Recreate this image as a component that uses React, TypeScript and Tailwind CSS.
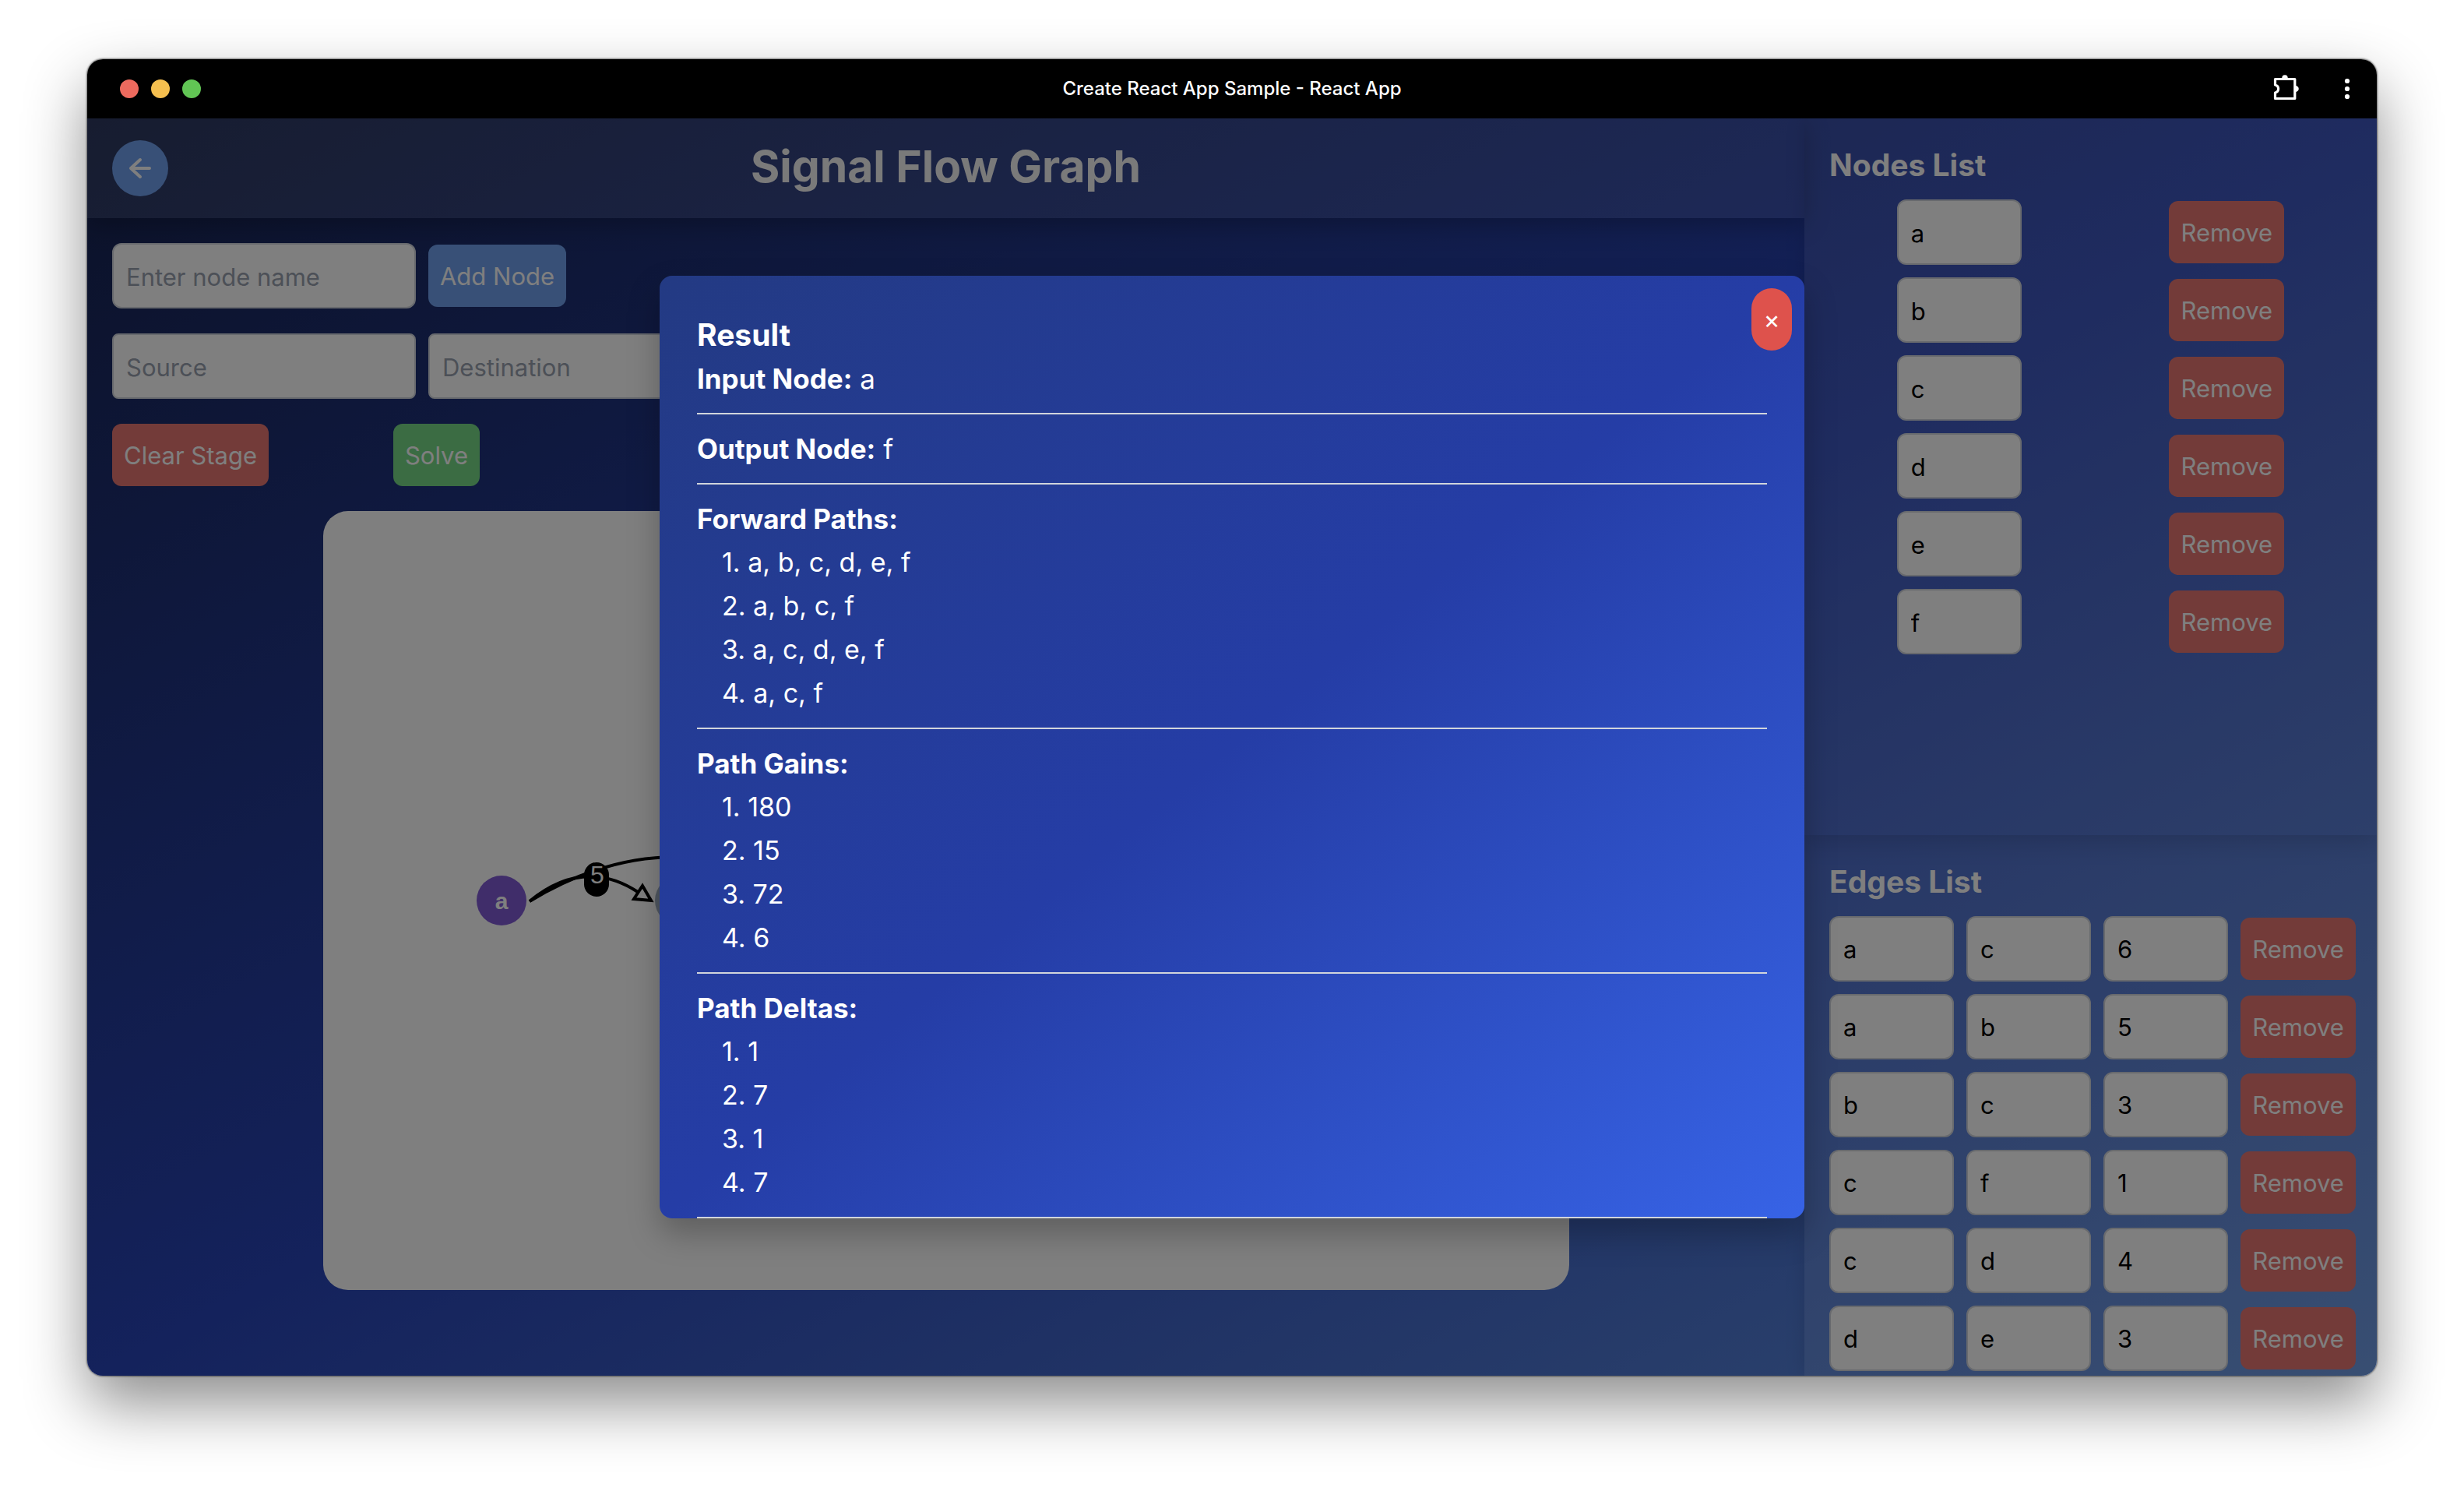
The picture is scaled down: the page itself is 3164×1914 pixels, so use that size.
import React from "react";

const forwardPaths = ["a, b, c, d, e, f", "a, b, c, f", "a, c, d, e, f", "a, c, f"];
const pathGains = ["180", "15", "72", "6"];
const pathDeltas = ["1", "7", "1", "7"];
const nodes = ["a", "b", "c", "d", "e", "f"];
const edges = [
  ["a", "c", "6"],
  ["a", "b", "5"],
  ["b", "c", "3"],
  ["c", "f", "1"],
  ["c", "d", "4"],
  ["d", "e", "3"],
];

const fieldClass =
  "h-[84px] border-2 border-gray-300 bg-white px-4 pt-0.5 text-[31px] text-black placeholder:text-gray-400";

function Field({ label, className }: { label: string; className: string }) {
  return <input aria-label={label} placeholder={label} className={`${fieldClass} w-[390px] ${className}`} />;
}

function SmallField({ label, value }: { label: string; value: string }) {
  return <input aria-label={label} defaultValue={value} className={`${fieldClass} w-40 rounded-xl`} />;
}

function Button({ children, className }: { children: string; className: string }) {
  return (
    <button type="button" className={`h-20 shrink-0 rounded-xl pt-0.5 text-[31px] text-white ${className}`}>
      {children}
    </button>
  );
}

function TitleBar() {
  return (
    <div className="grid h-[76px] shrink-0 grid-cols-[1fr_auto_1fr] items-center bg-black px-[34px] text-white">
      <div className="flex gap-4 pl-2">
        <span className="size-6 rounded-full bg-[#ed6a5e]" />
        <span className="size-6 rounded-full bg-[#f5bf4f]" />
        <span className="size-6 rounded-full bg-[#61c554]" />
      </div>
      <div className="text-center text-2xl font-medium">Create React App Sample - React App</div>
      <div className="flex items-center justify-end gap-14">
        <button type="button" aria-label="Extensions">
          <svg viewBox="0 0 36 36" className="size-9" fill="none" stroke="currentColor" strokeWidth="3.2" strokeLinejoin="round">
            <path d="M3.5 5.5 H28.8 V30.5 H3.5 V23 C9 21.5 9 14.5 3.5 13 Z" />
            <path d="M12.2 4.5 a3.8 4.3 0 0 1 7.6 0 Z M29.5 14 a4.3 4 0 0 1 0 8 Z" fill="currentColor" stroke="none" />
          </svg>
        </button>
        <button type="button" aria-label="Menu">
          <svg viewBox="0 0 8 28" className="h-7 w-2" fill="currentColor">
            <circle cx="4" cy="4" r="3.1" />
            <circle cx="4" cy="14" r="3.1" />
            <circle cx="4" cy="24" r="3.1" />
          </svg>
        </button>
      </div>
    </div>
  );
}

function Graph() {
  return (
    <svg viewBox="0 0 1600 1000" className="h-full w-full font-['Liberation_Sans',sans-serif]" fill="none">
      <path d="M265 501 Q453 387 641 501" stroke="black" strokeWidth="4" />
      <path d="M265 501 Q335 444 404 489" stroke="black" strokeWidth="4" />
      <path d="M410 481 L399 498 L421 500 Z" stroke="black" strokeWidth="4" fill="white" />
      <rect x="335" y="451" width="32" height="44" rx="16" fill="black" />
      <text x="352" y="478" textAnchor="middle" fill="white" fontSize="32">5</text>
      <circle cx="229" cy="500" r="32" fill="#805ad5" />
      <text x="229" y="511" textAnchor="middle" fill="white" fontSize="30" fontWeight="700">a</text>
      <circle cx="458" cy="500" r="32" fill="#a0aec0" />
      <text x="458" y="511" textAnchor="middle" fill="white" fontSize="30" fontWeight="700">b</text>
    </svg>
  );
}

function ResultList({ title, items }: { title: string; items: string[] }) {
  return (
    <section className="border-b-2 border-gray-300 py-4">
      <h3 className="font-bold">{title}</h3>
      <ol className="list-inside list-decimal pl-8 text-[34px] leading-[56px] marker:[font-variant-numeric:proportional-nums]">
        {items.map((item, i) => (
          <li key={i}>{item}</li>
        ))}
      </ol>
    </section>
  );
}

function ResultDialog() {
  return (
    <div
      role="dialog"
      aria-label="Result"
      className="relative h-3/4 w-1/2 overflow-hidden rounded-2xl bg-linear-to-br/srgb from-[#233a83] via-[#253da6] to-[#3763e6] px-12 pt-12 text-[35px] leading-[56px] text-white shadow-[0_20px_40px_rgba(0,0,0,0.25)]"
    >
      <button
        type="button"
        aria-label="Close"
        className="absolute top-4 right-4 h-20 w-[52px] rounded-full bg-[#de524c] pt-0.5 text-[32px]"
      >
        ×
      </button>
      <h2 className="text-[39px] font-bold">Result</h2>
      <p className="border-b-2 border-gray-300 pb-4">
        <strong className="font-bold">Input Node:</strong> a
      </p>
      <p className="border-b-2 border-gray-300 py-4">
        <strong className="font-bold">Output Node:</strong> f
      </p>
      <ResultList title="Forward Paths:" items={forwardPaths} />
      <ResultList title="Path Gains:" items={pathGains} />
      <ResultList title="Path Deltas:" items={pathDeltas} />
    </div>
  );
}

export default function App() {
  return (
    <div className="flex h-screen flex-col bg-white px-28 pt-[76px] pb-[148px] font-['Inter',sans-serif]">
      <div className="flex min-h-0 flex-1 flex-col overflow-hidden rounded-[20px] shadow-[0_36px_80px_rgba(0,0,0,0.45),0_0_2px_1px_rgba(0,0,0,0.5)]">
        <TitleBar />
        <div className="relative flex min-h-0 flex-1 bg-linear-to-br/srgb from-[#17234e] via-[#2844b8] to-[#6192e2]">
          <main className="flex w-3/4 flex-col">
            <header className="flex h-32 shrink-0 items-center bg-white/10 px-8 shadow-[0_8px_30px_rgba(0,0,0,0.25)]">
              <button
                type="button"
                aria-label="Back"
                className="flex size-[72px] items-center justify-center rounded-full bg-[#70a1ee] text-white"
              >
                <svg viewBox="0 0 32 32" className="size-8" fill="none" stroke="currentColor" strokeWidth="4" strokeLinecap="round" strokeLinejoin="round">
                  <path d="M28 16 H4 M16 5 L4 16 L16 27" />
                </svg>
              </button>
              <h1 className="flex-1 pr-[72px] pb-1 text-center text-[57px] font-bold text-[#f4f4f4]">Signal Flow Graph</h1>
            </header>
            <div className="flex min-h-0 flex-1 flex-col gap-8 p-8">
              <div className="flex items-center gap-4">
                <Field label="Enter node name" className="rounded-xl" />
                <Button className="w-[177px] bg-[#70a1ee]">Add Node</Button>
              </div>
              <div className="flex items-center gap-4">
                <Field label="Source" className="rounded-lg" />
                <Field label="Destination" className="rounded-lg" />
                <Field label="Gain" className="rounded-lg" />
                <Button className="w-[177px] bg-[#70a1ee]">Add Edge</Button>
              </div>
              <div className="flex gap-40">
                <Button className="w-[201px] bg-[#e67672]">Clear Stage</Button>
                <Button className="w-[111px] bg-[#76d986]">Solve</Button>
              </div>
              <div className="h-[1000px] w-[1600px] shrink-0 self-center overflow-hidden rounded-[32px] bg-white">
                <Graph />
              </div>
            </div>
          </main>
          <aside className="flex w-1/4 flex-col overflow-hidden bg-white/10 shadow-[0_0_24px_rgba(0,0,0,0.12)]">
            <section className="h-[57%] shrink-0 p-8 shadow-[0_8px_30px_rgba(0,0,0,0.15)]">
              <h2 className="mb-4 text-[39px] leading-[56px] font-bold text-white">Nodes List</h2>
              <ul className="-mx-2 flex flex-col gap-4">
                {nodes.map((node) => (
                  <li key={node} className="flex items-center justify-around">
                    <SmallField label={`Node ${node}`} value={node} />
                    <Button className="w-[148px] bg-[#e67672]">Remove</Button>
                  </li>
                ))}
              </ul>
            </section>
            <section className="min-h-0 flex-1 overflow-hidden p-8 pr-0">
              <h2 className="mb-4 text-[39px] leading-[56px] font-bold text-white">Edges List</h2>
              <ul className="flex flex-col gap-4">
                {edges.map(([from, to, gain]) => (
                  <li key={from + to} className="flex items-center gap-4">
                    <SmallField label={`Edge ${from}${to} source`} value={from} />
                    <SmallField label={`Edge ${from}${to} destination`} value={to} />
                    <SmallField label={`Edge ${from}${to} gain`} value={gain} />
                    <Button className="w-[148px] bg-[#e67672]">Remove</Button>
                  </li>
                ))}
              </ul>
            </section>
          </aside>
          <div className="absolute inset-0 flex items-center justify-center bg-black/50">
            <ResultDialog />
          </div>
        </div>
      </div>
    </div>
  );
}
